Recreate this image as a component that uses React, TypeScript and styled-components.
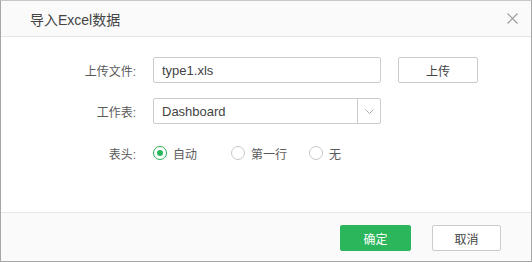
import React, { useState } from 'react';
import styled, { createGlobalStyle } from 'styled-components';

const GlobalStyle = createGlobalStyle`
  html, body {
    margin: 0;
    padding: 0;
    background: #ffffff;
  }
  body {
    font-family: "Liberation Sans", "Noto Sans CJK SC", Arial, sans-serif;
    color: #333333;
  }
`;

const Dialog = styled.div`
  box-sizing: border-box;
  width: 532px;
  height: 262px;
  border: 1px solid #a6a6a6;
  border-top-color: #c8c8c8;
  background: #ffffff;
  display: flex;
  flex-direction: column;
`;

const Header = styled.div`
  height: 35px;
  flex: none;
  display: flex;
  align-items: center;
  justify-content: space-between;
  padding: 0 13px 0 29px;
  background: #fafafa;
  border-bottom: 1px solid #e6e6e6;
`;

const Title = styled.div`
  font-size: 14px;
  color: #444444;
  padding-top: 1px;
`;

const CloseButton = styled.button`
  width: 12px;
  height: 12px;
  padding: 0;
  border: none;
  background: transparent;
  cursor: pointer;
  display: flex;
  align-items: center;
  justify-content: center;
`;

const Body = styled.div`
  flex: 1;
  display: flex;
  flex-direction: column;
  padding-top: 20px;
`;

const Row = styled.div<{ gap?: number }>`
  display: flex;
  align-items: center;
  height: 26px;
  margin-top: ${({ gap }) => gap ?? 0}px;
`;

const Label = styled.div`
  width: 135px;
  text-align: right;
  font-size: 12px;
  color: #5a5a5a;
  margin-right: 17px;
`;

const TextInput = styled.input`
  box-sizing: border-box;
  width: 228px;
  height: 26px;
  border: 1px solid #cccccc;
  border-radius: 2px;
  padding: 0 8px;
  font-family: "Liberation Sans", "Noto Sans CJK SC", Arial, sans-serif;
  font-size: 13px;
  color: #444444;
  outline: none;
`;

const Button = styled.button<{ primary?: boolean }>`
  box-sizing: border-box;
  width: ${({ primary }) => (primary ? 71 : 69)}px;
  height: 26px;
  border-radius: 2px;
  border: 1px solid ${({ primary }) => (primary ? '#2bb65b' : '#cccccc')};
  background: ${({ primary }) => (primary ? '#2bb65b' : '#ffffff')};
  color: ${({ primary }) => (primary ? '#ffffff' : '#444444')};
  font-family: "Liberation Sans", "Noto Sans CJK SC", Arial, sans-serif;
  font-size: 12px;
  cursor: pointer;
  padding: 0;
`;

const UploadButton = styled(Button)`
  width: 80px;
  margin-left: 17px;
`;

const Select = styled.div`
  box-sizing: border-box;
  width: 228px;
  height: 26px;
  border: 1px solid #cccccc;
  border-radius: 2px;
  display: flex;
  align-items: stretch;
`;

const SelectValue = styled.div`
  flex: 1;
  display: flex;
  align-items: center;
  padding: 0 8px;
  font-size: 13px;
  color: #444444;
`;

const SelectArrow = styled.div`
  width: 22px;
  border-left: 1px solid #cccccc;
  display: flex;
  align-items: center;
  justify-content: center;
`;

const RadioGroup = styled.div`
  display: flex;
  align-items: center;
`;

const RadioOption = styled.label`
  width: 78px;
  display: flex;
  align-items: center;
  cursor: pointer;
  font-size: 12px;
  color: #5a5a5a;
`;

const RadioCircle = styled.span<{ checked: boolean }>`
  box-sizing: border-box;
  width: 14px;
  height: 14px;
  border-radius: 50%;
  border: 1px solid ${({ checked }) => (checked ? '#2bb65b' : '#c8c8c8')};
  margin-right: 6px;
  display: flex;
  align-items: center;
  justify-content: center;
  background: #ffffff;

  &::after {
    content: '';
    width: 6px;
    height: 6px;
    border-radius: 50%;
    background: ${({ checked }) => (checked ? '#2bb65b' : 'transparent')};
  }
`;

const Footer = styled.div`
  height: 49px;
  flex: none;
  display: flex;
  align-items: flex-start;
  justify-content: flex-end;
  gap: 21px;
  padding: 12px 30px 0 0;
  box-sizing: border-box;
  background: #fafafa;
  border-top: 1px solid #e6e6e6;
`;

const options = ['自动', '第一行', '无'];

export default function App() {
  const [header, setHeader] = useState('自动');

  return (
    <>
      <GlobalStyle />
      <Dialog>
        <Header>
          <Title>导入Excel数据</Title>
          <CloseButton aria-label="close">
            <svg width="11" height="11" viewBox="0 0 11 11">
              <path d="M0.5 0.5 L10.5 10.5 M10.5 0.5 L0.5 10.5" stroke="#999999" strokeWidth="1.1" />
            </svg>
          </CloseButton>
        </Header>
        <Body>
          <Row>
            <Label>上传文件:</Label>
            <TextInput defaultValue="type1.xls" />
            <UploadButton>上传</UploadButton>
          </Row>
          <Row gap={15}>
            <Label>工作表:</Label>
            <Select>
              <SelectValue>Dashboard</SelectValue>
              <SelectArrow>
                <svg width="9" height="5" viewBox="0 0 9 5">
                  <path d="M0.5 0.5 L4.5 4.5 L8.5 0.5" fill="none" stroke="#aaaaaa" strokeWidth="1" />
                </svg>
              </SelectArrow>
            </Select>
          </Row>
          <Row gap={16}>
            <Label>表头:</Label>
            <RadioGroup>
              {options.map((o) => (
                <RadioOption key={o} onClick={() => setHeader(o)}>
                  <RadioCircle checked={header === o} />
                  {o}
                </RadioOption>
              ))}
            </RadioGroup>
          </Row>
        </Body>
        <Footer>
          <Button primary>确定</Button>
          <Button>取消</Button>
        </Footer>
      </Dialog>
    </>
  );
}
